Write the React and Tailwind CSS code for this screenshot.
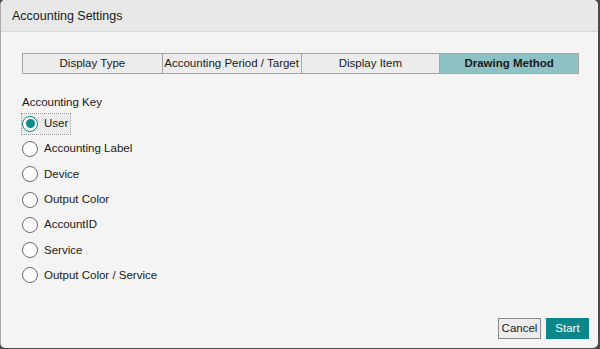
import { useState } from "react";

const TABS = ["Display Type", "Accounting Period / Target", "Display Item", "Drawing Method"];
const KEYS = [
  "User",
  "Accounting Label",
  "Device",
  "Output Color",
  "AccountID",
  "Service",
  "Output Color / Service",
];

function Radio({ checked }) {
  return (
    <span
      className={`flex items-center justify-center w-[16px] h-[16px] rounded-full border-[1.5px] shrink-0 bg-white ${
        checked ? "border-[#0a8a8f]" : "border-[#6b6b6b]"
      }`}
    >
      {checked && <span className="w-[9px] h-[9px] rounded-full bg-[#0a8a8f]" />}
    </span>
  );
}

export default function App() {
  const [selected, setSelected] = useState(0);
  const activeTab = 3;

  return (
    <div
      className="w-[600px] h-[349px] bg-[#4a4a4a] overflow-hidden"
      style={{ fontFamily: '"Liberation Sans", Arial, sans-serif' }}
    >
      <div className="w-[598px] h-[348px] bg-[#f4f4f4] rounded-[5px] border-l border-[#a9a9a9] flex flex-col overflow-hidden">
        {/* Header */}
        <div className="h-[32px] bg-[#e8e8e8] border-b border-[#d6d6d6] flex items-center pl-[11px] pt-[1px] shrink-0">
          <h1 className="text-[12.5px] text-[#1a1a1a]">Accounting Settings</h1>
        </div>

        {/* Body */}
        <div className="flex-1 flex flex-col pl-[21px] pr-[19px] pt-[21px]">
          {/* Tabs */}
          <div className="grid grid-cols-4 border border-[#a6a6a6] h-[21px]">
            {TABS.map((t, i) => (
              <div
                key={t}
                className={`flex items-center justify-center whitespace-nowrap text-[11.5px] text-[#1a1a1a] ${
                  i > 0 ? "border-l border-[#a6a6a6]" : ""
                } ${i === activeTab ? "bg-[#8cc2c3] font-bold" : "bg-[#ececec]"}`}
              >
                {t}
              </div>
            ))}
          </div>

          {/* Accounting key */}
          <p className="mt-[21px] text-[11.5px] text-[#1a1a1a] leading-[14px]">Accounting Key</p>
          <div className="flex flex-col mt-[2px]">
            {KEYS.map((k, i) => (
              <div key={k} className="h-[25.3px] flex items-center">
                <button
                  onClick={() => setSelected(i)}
                  className={`flex items-center gap-[6px] pr-[2px] h-[20px] ${
                    selected === i ? "outline outline-1 outline-dotted outline-[#9a9a9a] bg-[#ececec]" : ""
                  }`}
                >
                  <Radio checked={selected === i} />
                  <span className="text-[11.5px] text-[#1a1a1a]">{k}</span>
                </button>
              </div>
            ))}
          </div>

          {/* Actions */}
          <div className="mt-auto mb-[9px] -mr-[10px] flex justify-end gap-[5px]">
            <button className="h-[21px] w-[43px] border border-[#8a8a8a] bg-[#ececec] text-[11.5px] text-[#1a1a1a]">
              Cancel
            </button>
            <button className="h-[21px] w-[43px] bg-[#0b878b] text-[11.5px] text-white">Start</button>
          </div>
        </div>
      </div>
    </div>
  );
}
